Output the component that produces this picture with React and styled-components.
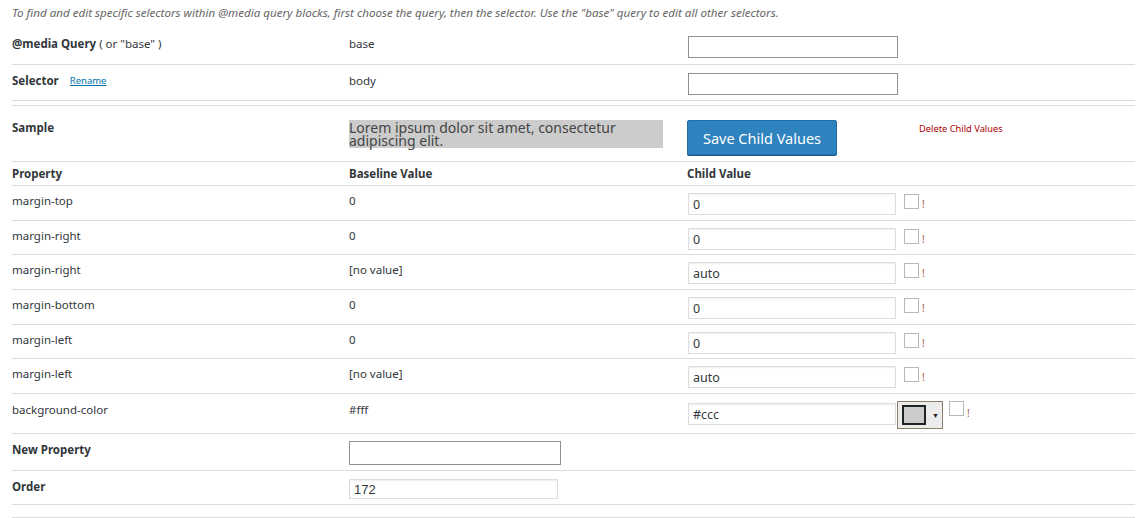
import styled, { createGlobalStyle } from 'styled-components'

const GlobalStyle = createGlobalStyle`
  body {
    margin: 0;
    background: #fff;
    font-family: "Noto Sans", "Open Sans", sans-serif;
    color: #32373c;
  }
`

const Page = styled.div`
  padding: 5px 8px 0 12px;
  width: 1123px;
`

const Intro = styled.p`
  margin: 0 0 9px;
  font-size: 11.6px;
  font-style: italic;
  color: #666;
  line-height: 16px;
`

const Table = styled.div`
  border-top: ${(p) => (p.$top ? '1px solid #dcdcde' : 'none')};
  margin-top: ${(p) => (p.$top ? '4px' : '0')};
`

const Row = styled.div`
  display: grid;
  grid-template-columns: 337px 338px 217px 1fr;
  border-bottom: 1px solid #dcdcde;
  padding: ${(p) => p.$pad || '7px 0 5px'};
  box-sizing: border-box;
  height: ${(p) => p.$h || 'auto'};
  align-items: start;
`

const Cell = styled.div`
  font-size: 11.5px;
  line-height: 16px;
  padding-top: ${(p) => p.$pt || '0'};
  display: flex;
  align-items: center;
  gap: ${(p) => p.$gap || '0'};
`

const Label = styled.span`
  font-weight: 700;
`

const Note = styled.span`
  font-weight: 400;
  margin-left: 3px;
`

const Rename = styled.a`
  font-size: 9.5px;
  color: #0073aa;
  text-decoration: underline;
  margin-left: 11px;
  cursor: pointer;
`

const PlainInput = styled.input`
  box-sizing: border-box;
  width: ${(p) => p.$w || '210px'};
  height: ${(p) => p.$h || '22px'};
  border: 1px solid #8c8f94;
  background: #fff;
  margin: ${(p) => p.$m || '0'};
  padding: 0 5px;
  font-family: "Liberation Sans", Arial, sans-serif;
  font-size: 13px;
  color: #32373c;
`

const ValueInput = styled.input`
  box-sizing: border-box;
  width: ${(p) => p.$w || '208px'};
  height: ${(p) => p.$h || '22px'};
  border: 1px solid #ddd;
  box-shadow: inset 0 1px 2px rgba(0, 0, 0, 0.07);
  background: #fff;
  margin-left: 1px;
  padding: 1px 4px 0;
  font-family: "Noto Sans", sans-serif;
  font-size: 12.5px;
  color: #32373c;
`

const Sample = styled.div`
  width: 314px;
  background: #ccc;
  font-size: 14px;
  line-height: 13px;
  color: #444;
  padding: 1px 0;
  margin-top: 0;
`

const SaveButton = styled.button`
  width: 150px;
  height: 35px;
  background: #2e82bd;
  border: 1px solid #1f6fa8;
  border-radius: 2px;
  box-shadow: 0 1px 0 #1b5d8d;
  color: #fff;
  font-family: "Noto Sans", sans-serif;
  font-size: 14.5px;
  cursor: pointer;
`

const DeleteLink = styled.a`
  font-size: 9.3px;
  color: #a00;
  margin-left: 15px;
  margin-top: 1px;
  cursor: pointer;
`

const Check = styled.span`
  display: inline-block;
  width: 13px;
  height: 13px;
  border: 1px solid #b4b9be;
  background: #fff;
  margin-left: ${(p) => p.$ml || '8px'};
  margin-top: ${(p) => p.$mt || '0'};
`

const Bang = styled.span`
  font-size: 10px;
  color: #a4553a;
  margin-left: 3px;
  margin-top: 4px;
`

const ColorButton = styled.span`
  box-sizing: border-box;
  width: 46px;
  height: 28px;
  margin-left: 1px;
  border: 1px solid #8b7d6b;
  background: #ececec;
  display: inline-flex;
  align-items: center;
  padding-left: 4px;
  gap: 6px;
`

const Swatch = styled.span`
  width: 20px;
  height: 16px;
  border: 2px solid #222;
  background: #ccc;
`

const Arrow = styled.span`
  font-size: 7px;
  color: #222;
  margin-top: 2px;
`

const Inline = styled.div`
  display: flex;
  align-items: flex-start;
`

const properties = [
  { name: 'margin-top', base: '0', child: '0' },
  { name: 'margin-right', base: '0', child: '0' },
  { name: 'margin-right', base: '[no value]', child: 'auto' },
  { name: 'margin-bottom', base: '0', child: '0' },
  { name: 'margin-left', base: '0', child: '0' },
  { name: 'margin-left', base: '[no value]', child: 'auto' },
]

export default function App() {
  return (
    <Page>
      <GlobalStyle />
      <Intro>
        To find and edit specific selectors within @media query blocks, first choose the query, then the selector. Use the "base" query to edit all other selectors.
      </Intro>
      <Table>
        <Row $pad="6px 0 0" $h="35px">
          <Cell $pt="0px">
            <Label>@media Query</Label>
            <Note>( or "base" )</Note>
          </Cell>
          <Cell $pt="0px">base</Cell>
          <Cell>
            <PlainInput $m="0 0 0 1px" />
          </Cell>
          <Cell />
        </Row>
        <Row $pad="8px 0 0" $h="36px">
          <Cell $pt="0px">
            <Label>Selector</Label>
            <Rename>Rename</Rename>
          </Cell>
          <Cell $pt="0px">body</Cell>
          <Cell>
            <PlainInput $m="0 0 0 1px" />
          </Cell>
          <Cell />
        </Row>
      </Table>
      <Table $top>
        <Row $pad="14px 0 5px" $h="56px">
          <Cell $pt="0px">
            <Label>Sample</Label>
          </Cell>
          <Cell>
            <Sample>Lorem ipsum dolor sit amet, consectetur adipiscing elit.</Sample>
          </Cell>
          <Cell>
            <SaveButton>Save Child Values</SaveButton>
          </Cell>
          <Cell>
            <DeleteLink>Delete Child Values</DeleteLink>
          </Cell>
        </Row>
        <Row $pad="4px 0 0" $h="24px">
          <Cell>
            <Label>Property</Label>
          </Cell>
          <Cell>
            <Label>Baseline Value</Label>
          </Cell>
          <Cell>
            <Label>Child Value</Label>
          </Cell>
          <Cell />
        </Row>
        {properties.map((p, i) => (
          <Row key={i} $pad="7px 0 0" $h="34.7px">
            <Cell $pt="0px">{p.name}</Cell>
            <Cell $pt="0px">{p.base}</Cell>
            <Cell>
              <ValueInput defaultValue={p.child} />
            </Cell>
            <Inline>
              <Check $ml="0px" $mt="1px" />
              <Bang>!</Bang>
            </Inline>
          </Row>
        ))}
        <Row $pad="7px 0 0" $h="40px">
          <Cell $pt="1px">background-color</Cell>
          <Cell $pt="1px">#fff</Cell>
          <Cell style={{ gridColumn: '3 / 5' }}>
            <Inline>
              <ValueInput defaultValue="#ccc" $h="22px" style={{ marginTop: '2px' }} />
              <ColorButton>
                <Swatch />
                <Arrow>▼</Arrow>
              </ColorButton>
              <Check $ml="6px" $mt="0px" />
              <Bang>!</Bang>
            </Inline>
          </Cell>
        </Row>
        <Row $pad="7px 0 0" $h="37px">
          <Cell $pt="1px">
            <Label>New Property</Label>
          </Cell>
          <Cell>
            <PlainInput $w="212px" $h="24px" />
          </Cell>
          <Cell />
          <Cell />
        </Row>
        <Row $pad="8px 0 0" $h="34px">
          <Cell $pt="0px">
            <Label>Order</Label>
          </Cell>
          <Cell>
            <ValueInput defaultValue="172" $w="209px" $h="20px" style={{ marginLeft: 0, fontFamily: '"Liberation Sans", Arial, sans-serif', fontSize: '13px' }} />
          </Cell>
          <Cell />
          <Cell />
        </Row>
        <Row $pad="0" $h="13px">
          <Cell />
        </Row>
      </Table>
    </Page>
  )
}
